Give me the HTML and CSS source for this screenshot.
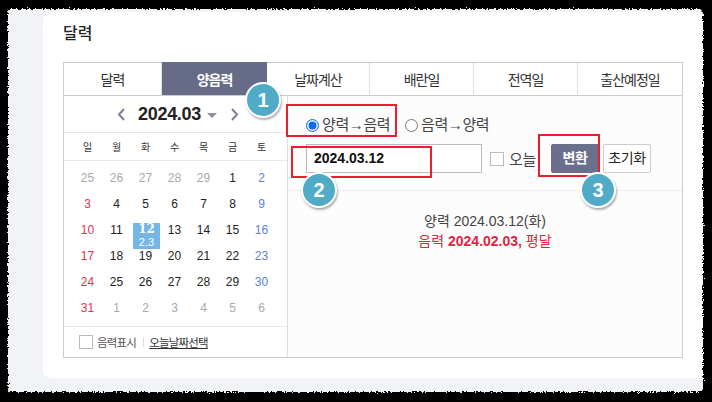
FILE: index.html
```html
<!DOCTYPE html>
<html lang="ko">
<head>
    <meta charset="UTF-8">
    <title>달력</title>
    <link rel="stylesheet" href="styles.css">
</head>
<body>
    <div class="page">
        <div class="card">
            <h2 class="card-title">달력</h2>
            <div class="box">
                <div class="tabs">
                    <div class="tab">달력</div>
                    <div class="tab active">양음력</div>
                    <div class="tab">날짜계산</div>
                    <div class="tab">배란일</div>
                    <div class="tab">전역일</div>
                    <div class="tab">출산예정일</div>
                </div>
                <div class="panels">
                    <div class="cal">
                        <div class="cal-head">
                            <svg class="chev" width="8" height="13" viewBox="0 0 8 13"><path d="M7 1 2 6.5 7 12" fill="none" stroke="#7a8099" stroke-width="2"/></svg>
                            <span class="cal-month">2024.03</span>
                            <span class="caret"></span>
                            <svg class="chev chev-next" width="8" height="13" viewBox="0 0 8 13"><path d="M1 1 6 6.5 1 12" fill="none" stroke="#7a8099" stroke-width="2"/></svg>
                        </div>
                        <div class="week">
                            <span>일</span><span>월</span><span>화</span><span>수</span><span>목</span><span>금</span><span>토</span>
                        </div>
                        <div class="days">
                            <span class="off">25</span><span class="off">26</span><span class="off">27</span><span class="off">28</span><span class="off">29</span><span>1</span><span class="sat">2</span>
                            <span class="sun">3</span><span>4</span><span>5</span><span>6</span><span>7</span><span>8</span><span class="sat">9</span>
                            <span class="sun">10</span><span>11</span><span class="today"><b>12</b><small>2.3</small></span><span>13</span><span>14</span><span>15</span><span class="sat">16</span>
                            <span class="sun">17</span><span>18</span><span>19</span><span>20</span><span>21</span><span>22</span><span class="sat">23</span>
                            <span class="sun">24</span><span>25</span><span>26</span><span>27</span><span>28</span><span>29</span><span class="sat">30</span>
                            <span class="sun">31</span><span class="off">1</span><span class="off">2</span><span class="off">3</span><span class="off">4</span><span class="off">5</span><span class="off">6</span>
                        </div>
                        <div class="cal-foot">
                            <span class="check"></span>
                            <span class="foot-label">음력표시</span>
                            <span class="foot-sep"></span>
                            <a class="foot-link">오늘날짜선택</a>
                        </div>
                    </div>
                    <div class="conv">
                        <div class="conv-form">
                            <div class="radios">
                                <span class="radio on"></span><span class="radio-label">양력→음력</span>
                                <span class="radio"></span><span class="radio-label">음력→양력</span>
                            </div>
                            <div class="inputs">
                                <div class="date-input">2024.03.12</div>
                                <span class="check today-check"></span>
                                <span class="today-label">오늘</span>
                                <div class="btn primary">변환</div>
                                <div class="btn">초기화</div>
                            </div>
                        </div>
                        <div class="result">
                            <p>양력 2024.03.12(화)</p>
                            <p class="lunar">음력 <strong>2024.02.03,</strong> 평달</p>
                        </div>
                    </div>
                </div>
            </div>
        </div>
    </div>

    <!-- annotations on top of the screenshot -->
    <div class="mark mark-1"></div>
    <div class="mark mark-2"></div>
    <div class="mark mark-3"></div>
    <div class="badge badge-1">1</div>
    <div class="badge badge-2">2</div>
    <div class="badge badge-3">3</div>

    <svg class="frame" width="712" height="402" viewBox="0 0 712 402">
        <defs>
            <filter id="torn" x="-5%" y="-5%" width="110%" height="110%">
                <feTurbulence type="fractalNoise" baseFrequency="0.55" numOctaves="2" seed="4"/>
                <feDisplacementMap in="SourceGraphic" scale="5" xChannelSelector="R" yChannelSelector="G"/>
            </filter>
        </defs>
        <path filter="url(#torn)" fill="#000" fill-rule="evenodd" d="M-30-30H742V432H-30ZM10 9H698Q703 9 703 14V388Q703 392 698 392H10Q8 392 8 390V11Q8 9 10 9Z"/>
    </svg>
</body>
</html>
```

FILE: styles.css
```css
* {
    box-sizing: border-box;
}
body {
    margin: 0;
    width: 712px;
    height: 402px;
    overflow: hidden;
    position: relative;
    background: #000;
    font-family: "Liberation Sans", "Noto Sans CJK KR", sans-serif;
    color: #222;
}
.page {
    height: 402px;
    padding: 12px 0 24px 43px;
    background: #f1f3f7;
}
.card {
    height: 100%;
    padding: 0 29px 0 20px;
    background: #fff;
    border-radius: 8px 0 0 8px;
}
.card-title {
    margin: 0;
    height: 50px;
    padding-top: 11px;
    font-size: 16px;
    line-height: 22px;
    font-weight: 500;
    color: #222;
}
.box {
    height: 296px;
    border: 1px solid #ccc;
    display: flex;
    flex-direction: column;
}

/* tabs */
.tabs {
    display: grid;
    grid-template-columns: 98px 105px 103px 104px 104px 1fr;
    height: 33px;
    border-bottom: 1px solid #ccc;
}
.tab {
    display: flex;
    align-items: center;
    justify-content: center;
    font-size: 14px;
    letter-spacing: -1px;
    border-right: 1px solid #e0e0e0;
    color: #333;
}
.tab:last-child {
    border-right: none;
}
.tab.active {
    background: #666b88;
    color: #fff;
    font-weight: 700;
    margin-top: -1px;
    border-right: none;
}

.panels {
    flex: 1;
    display: flex;
}

/* calendar */
.cal {
    width: 224px;
    border-right: 1px solid #ddd;
    display: flex;
    flex-direction: column;
    background: #fff;
}
.cal-head {
    height: 37px;
    border-bottom: 1px solid #e8e8e8;
    display: flex;
    align-items: center;
    padding-left: 53px;
}
.cal-month {
    font-size: 18px;
    font-weight: 700;
    margin: 0 6px 0 13px;
    letter-spacing: -0.3px;
}
.caret {
    width: 0;
    height: 0;
    border-left: 5px solid transparent;
    border-right: 5px solid transparent;
    border-top: 5px solid #8a8fa5;
    margin-top: 2px;
}
.chev-next {
    margin-left: 14px;
}
.week {
    height: 28px;
    border-bottom: 1px solid #e8e8e8;
    padding-left: 9px;
    display: grid;
    grid-template-columns: repeat(7, 29px);
    align-items: center;
    text-align: center;
    font-size: 10px;
    color: #333;
}
.days {
    padding: 4px 0 0 9px;
    display: grid;
    grid-template-columns: repeat(7, 29px);
    grid-auto-rows: 26px;
    font-size: 12px;
    color: #222;
    text-align: center;
    line-height: 26px;
    height: 165px;
}
.days .off {
    color: #a9a9a9;
}
.days .sun {
    color: #e8304a;
}
.days .sat {
    color: #5b80d2;
}
/* the highlight hangs a little below its row, the lunar date sits in it */
.days .today {
    margin: 6px 0 -6px 2px;
    background: #74b6e6;
    color: #fff;
    display: flex;
    flex-direction: column;
    align-items: center;
    line-height: 13px;
}
.today b {
    font-family: "DejaVu Serif", serif;
    font-size: 12px;
}
.today small {
    font-size: 11px;
}
.cal-foot {
    flex: 1;
    border-top: 1px solid #e8e8e8;
    display: flex;
    align-items: center;
    padding-left: 15px;
    font-size: 11.5px;
    letter-spacing: -0.8px;
    color: #555;
}
.check {
    width: 14px;
    height: 14px;
    border: 1px solid #bbb;
    background: #fff;
    display: inline-block;
}
.foot-label {
    margin-left: 4px;
}
.foot-sep {
    width: 1px;
    height: 10px;
    background: #ddd;
    margin: 0 5px 0 7px;
}
.foot-link {
    color: #333;
    text-decoration: underline;
}

/* converter */
.conv {
    flex: 1;
    background: #fcfcfc;
}
.conv-form {
    height: 95px;
    border-bottom: 1px solid #eee;
    padding-left: 18px;
}
.radios {
    height: 48px;
    padding-top: 19px;
    display: flex;
    align-items: flex-start;
    font-size: 15px;
    letter-spacing: -0.4px;
    color: #444;
    line-height: 20px;
}
.radio {
    width: 13px;
    height: 13px;
    margin-top: 4px;
    border-radius: 50%;
    border: 1px solid #777;
    background: #fff;
}
.radio.on {
    border: 1px solid #0a6cf0;
    box-shadow: inset 0 0 0 1.5px #fff, inset 0 0 0 7px #0a6cf0;
}
.radio-label {
    margin: 0 14px 0 3px;
    width: 69px;
    white-space: nowrap;
}
.inputs {
    display: flex;
    align-items: center;
    height: 29px;
}
.date-input {
    width: 176px;
    height: 29px;
    border: 1px solid #bbb;
    background: #fff;
    padding-left: 7px;
    font-size: 14px;
    font-weight: 700;
    line-height: 27px;
    color: #111;
}
.today-check {
    margin-left: 8px;
}
.today-label {
    margin: 0 13px 0 5px;
    width: 29px;
    font-size: 15px;
    letter-spacing: -0.3px;
    white-space: nowrap;
    color: #444;
}
.btn {
    width: 48px;
    height: 29px;
    margin-right: 4px;
    border: 1px solid #ccc;
    border-radius: 2px;
    background: #fff;
    font-size: 14px;
    line-height: 27px;
    text-align: center;
    letter-spacing: -0.4px;
}
.btn.primary {
    background: #6b6f8e;
    border-color: #6b6f8e;
    color: #fff;
    font-weight: 700;
}
.result {
    padding-top: 20px;
    text-align: center;
    font-size: 14px;
    line-height: 20px;
    color: #444;
}
.result p {
    margin: 0;
}
.result .lunar {
    color: #e0243f;
}

/* red boxes and number badges */
.mark {
    position: absolute;
    border: 2px solid #ee1c2e;
}
.mark-1 {
    left: 286px;
    top: 104px;
    width: 111px;
    height: 33px;
}
.mark-2 {
    left: 291px;
    top: 146px;
    width: 141px;
    height: 32px;
}
.mark-3 {
    left: 538px;
    top: 134px;
    width: 62px;
    height: 43px;
}
.badge {
    position: absolute;
    width: 36px;
    height: 36px;
    border-radius: 50%;
    background: #4fabc6;
    border: 2px solid #fff;
    box-shadow: 1px 2px 2px rgba(0,0,0,0.3);
    color: #fff;
    font-size: 20px;
    font-weight: 700;
    line-height: 32px;
    text-align: center;
}
.badge-1 {
    left: 245px;
    top: 82px;
}
.badge-2 {
    left: 301px;
    top: 172px;
}
.badge-3 {
    left: 580px;
    top: 172px;
}
.frame {
    position: absolute;
    left: 0;
    top: 0;
}
```
